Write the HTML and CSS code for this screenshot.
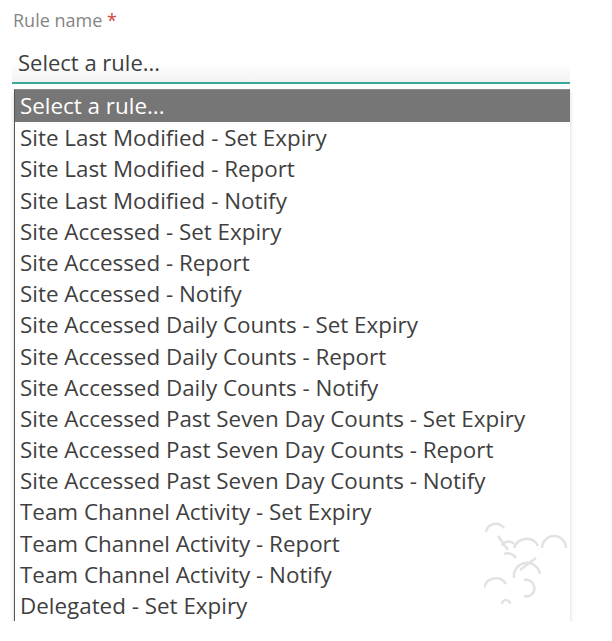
FILE: index.html
```html
<!DOCTYPE html>
<html>
<head>
<meta charset="utf-8">
<link rel="stylesheet" href="styles.css">
</head>
<body>
<div class="field">
  <label class="label">Rule name <span class="req">*</span></label>
  <div class="select">Select a rule...</div>
  <ul class="options">
    <li class="opt active">Select a rule...</li>
    <li class="opt">Site Last Modified - Set Expiry</li>
    <li class="opt">Site Last Modified - Report</li>
    <li class="opt">Site Last Modified - Notify</li>
    <li class="opt">Site Accessed - Set Expiry</li>
    <li class="opt">Site Accessed - Report</li>
    <li class="opt">Site Accessed - Notify</li>
    <li class="opt">Site Accessed Daily Counts - Set Expiry</li>
    <li class="opt">Site Accessed Daily Counts - Report</li>
    <li class="opt">Site Accessed Daily Counts - Notify</li>
    <li class="opt">Site Accessed Past Seven Day Counts - Set Expiry</li>
    <li class="opt">Site Accessed Past Seven Day Counts - Report</li>
    <li class="opt">Site Accessed Past Seven Day Counts - Notify</li>
    <li class="opt">Team Channel Activity - Set Expiry</li>
    <li class="opt">Team Channel Activity - Report</li>
    <li class="opt">Team Channel Activity - Notify</li>
    <li class="opt">Delegated - Set Expiry</li>
  </ul>
  <svg class="mark" width="90" height="90" viewBox="0 0 90 90" fill="none" stroke="#e2e2e2" stroke-width="2.5">
    <path d="M2 14 A10 10 0 0 1 20 10"/>
    <path d="M18 28 A7 7 0 0 1 30 26"/>
    <path d="M30 30 A13 13 0 0 1 54 28"/>
    <path d="M58 30 A12 12 0 0 1 82 30"/>
    <path d="M14 18 L24 32"/>
    <path d="M20 36 A10 10 0 0 1 32 40"/>
    <path d="M52 40 L36 52"/>
    <path d="M30 60 A12 12 0 0 1 56 56"/>
    <path d="M40 62 A8 8 0 0 1 50 68 A8 8 0 0 1 40 78"/>
    <path d="M0 70 A12 12 0 0 1 22 66"/>
    <path d="M18 86 A4 4 0 0 1 26 86"/>
  </svg>
</div>
</body>
</html>
```
FILE: styles.css
```css
html, body {
  margin: 0;
  padding: 0;
  background: #fff;
}

.field {
  position: relative;
  width: 558px;
  margin-left: 12px;
  font-family: "Open Sans", "Segoe UI", sans-serif;
}

.label {
  display: block;
  padding: 9px 0 0 1px;
  height: 23px;
  font-size: 18px;
  line-height: 22px;
  color: #858585;
}

.req {
  color: #d0453f;
}

.select {
  height: 52px;
  box-sizing: border-box;
  padding: 15px 0 0 6px;
  font-size: 22px;
  line-height: 30px;
  color: #3e3e3e;
  border-bottom: 2px solid #3aa99b;
  background: linear-gradient(#fff 60%, #f3f3f3);
}

.options {
  list-style: none;
  margin: 5px 0 0 2px;
  padding: 0;
  border-top: 1px solid #8a8a8a;
  border-left: 1px solid #555;
  background: #fff;
  box-shadow: 0 3px 4px rgba(0, 0, 0, 0.18);
}

.opt {
  height: 31.2px;
  line-height: 31px;
  padding-left: 5px;
  font-size: 22.4px;
  color: #3f3f3f;
  white-space: nowrap;
  overflow: hidden;
}

.opt.active {
  height: 32.2px;
  background: #767676;
  color: #fff;
}

.mark {
  position: absolute;
  left: 472px;
  top: 518px;
}
```
